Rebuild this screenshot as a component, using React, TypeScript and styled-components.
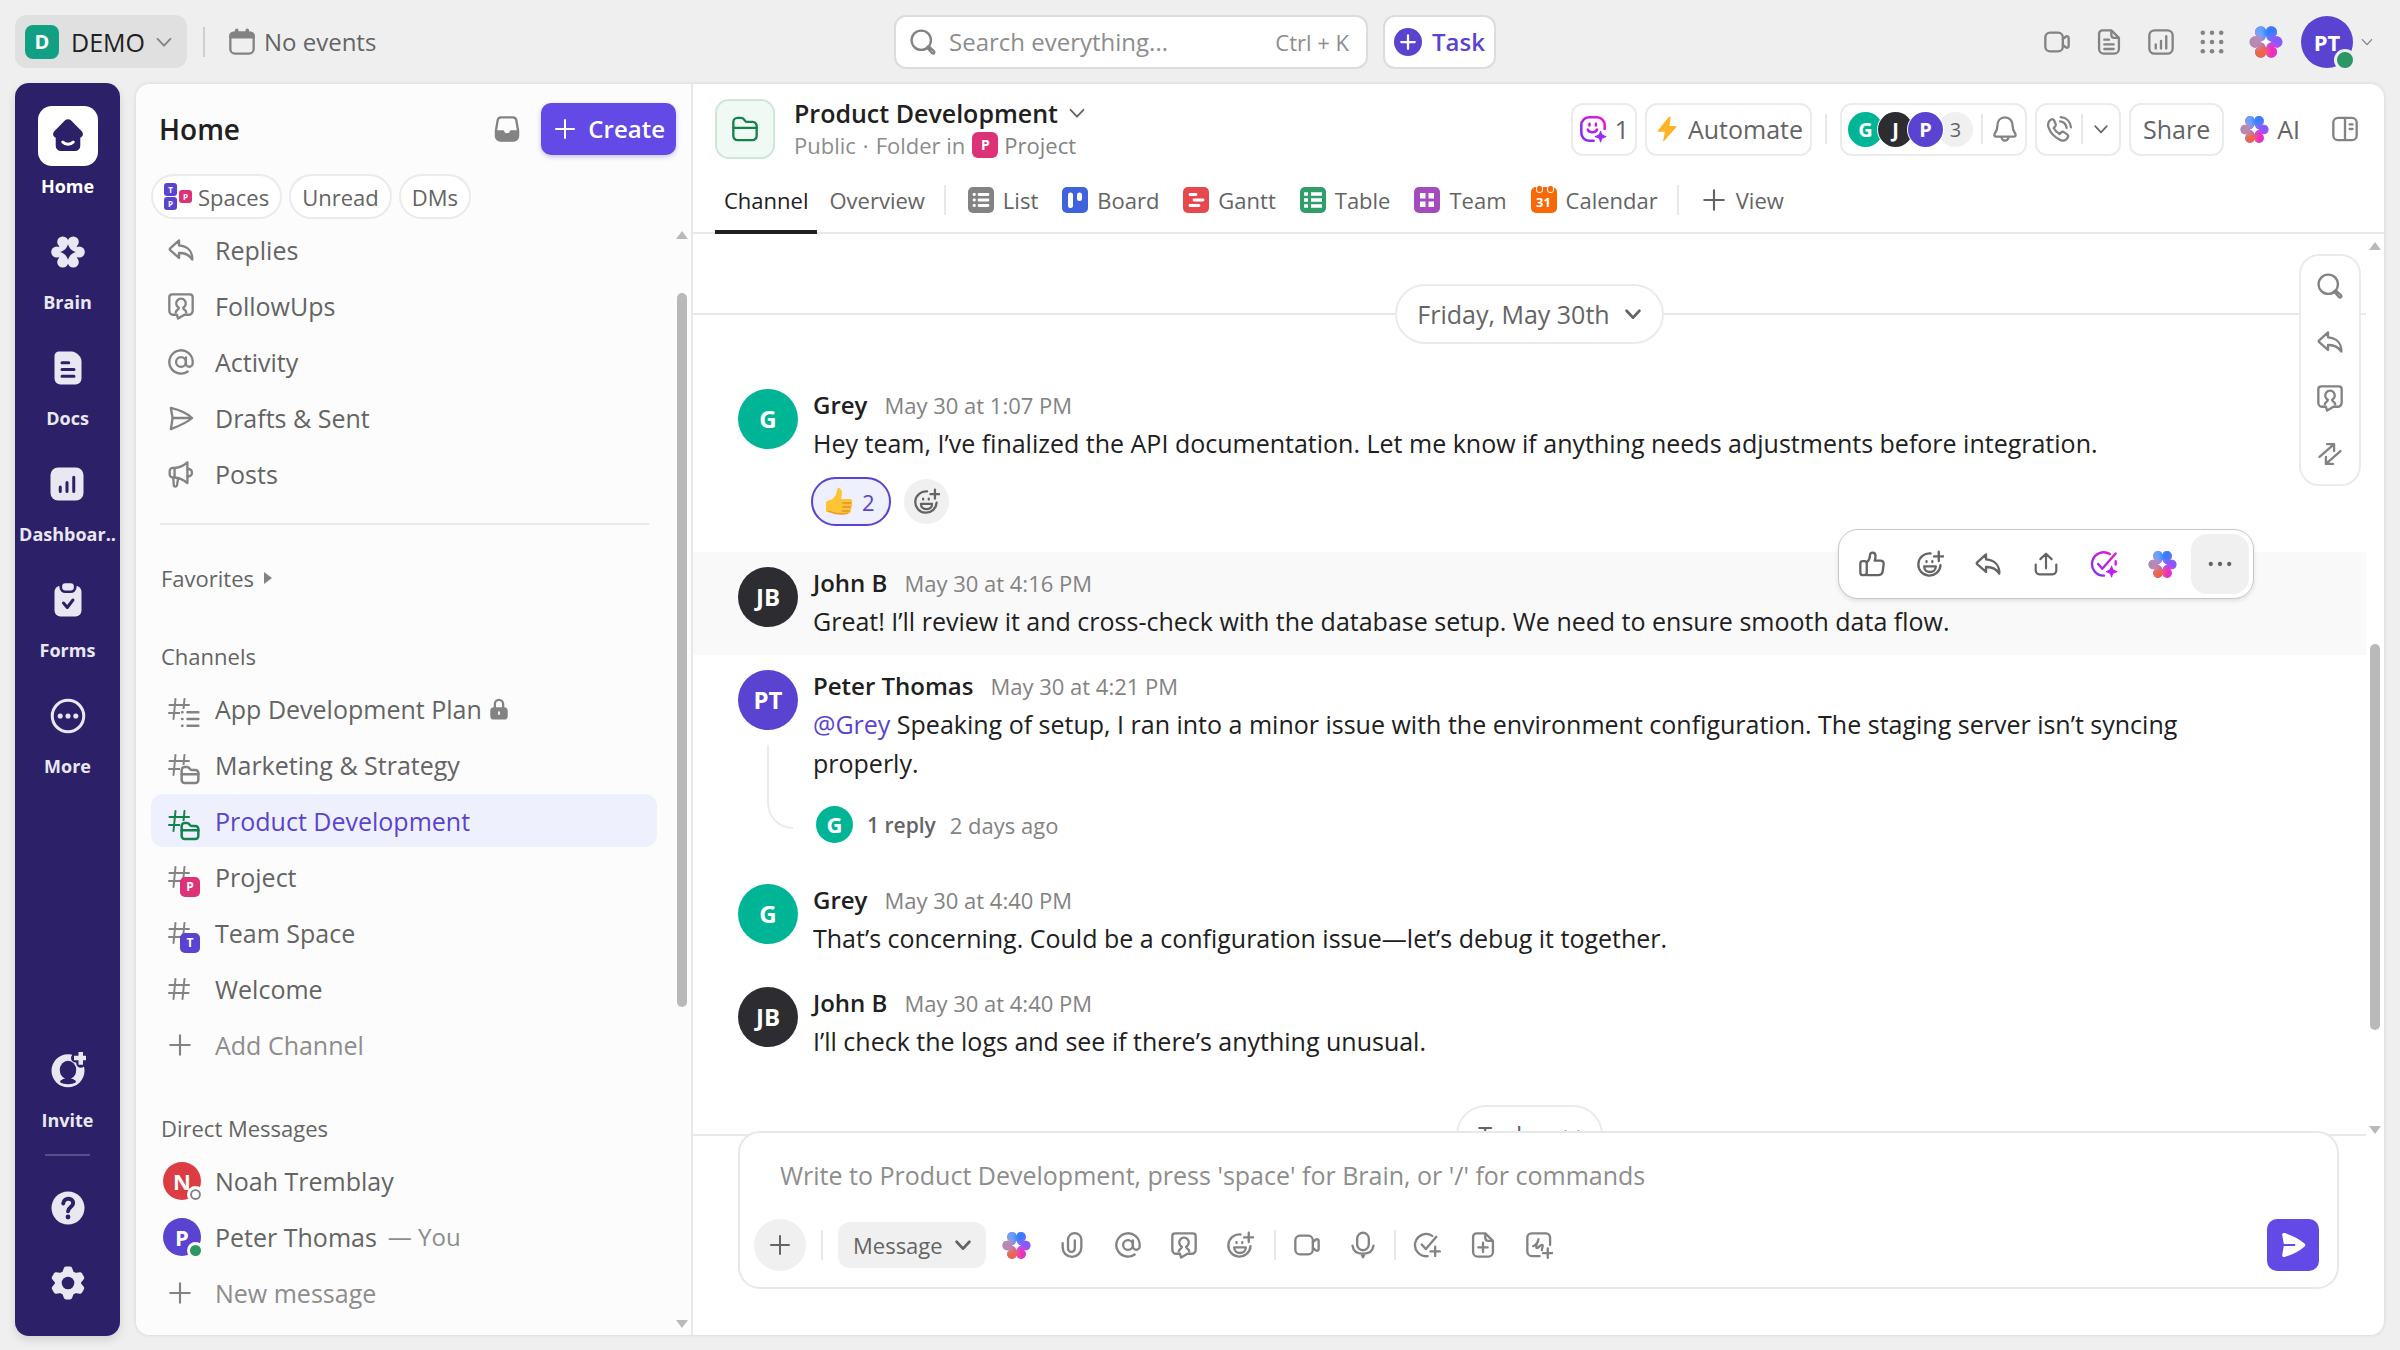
import React, { useId } from "react";
import styled, { createGlobalStyle } from "styled-components";

const ink = "#202020";
const body = "#646464";
const muted = "#838383";
const faint = "#8d8d8d";
const line = "#e8e8e8";
const brand = "#6349e6";
const violet = "#5a43d0";
const navy = "#2c2169";
const teal = "#00b596";
const coal = "#2d2d31";
const pink = "#dd3178";
const green = "#12834a";

const Global = createGlobalStyle`
  * { box-sizing: border-box; }
  html, body, #root { height: 100%; }
  body { margin: 0; background: #efefef; color: ${ink}; font-family: "Open Sans", "Noto Sans", sans-serif; font-size: 24px; line-height: 32px; }
  button, input, select { font: inherit; color: inherit; margin: 0; }
  button { border: 0; padding: 0; background: none; cursor: pointer; display: flex; align-items: center; }
  a { color: inherit; text-decoration: none; }
  ul { list-style: none; margin: 0; padding: 0; }
  h1, h2, p { margin: 0; }
  svg { display: block; flex: none; }
`;

/* ---------- icons ---------- */

const plusPath = (cx: number, cy: number, r: number) => `M${cx - r} ${cy}h${2 * r}M${cx} ${cy - r}v${2 * r}`;

const glyphs = {
  chevron: <path d="M5 8.5l7 7.5 7-7.5" />,
  plus: <path d="M3 12h18M12 3v18" />,
  search: (
    <>
      <circle cx="10.5" cy="10.5" r="8.3" />
      <path d="M16.6 15.6l4.8 4.3c1.1 1.1-.4 2.8-1.6 1.700l-4.300-4.900" />
    </>
  ),
  calendar: (
    <>
      <rect x="2" y="4" width="20" height="18" rx="4" />
      <path d="M2 6.500C2 5 3.500 4 5 4h14c1.500 0 3 1 3 2.500V8H2z" fill="currentColor" />
      <path d="M7.500 2v3M16.500 2v3" strokeWidth="3" />
    </>
  ),
  inbox: (
    <>
      <path d="M7 2h10a3 3 0 0 1 3 2.500l1.500 9V18a4 4 0 0 1-4 4h-11a4 4 0 0 1-4-4v-4.500l1.500-9A3 3 0 0 1 7 2z" />
      <path d="M3 14h5.500c.5 1.800 1.800 2.700 3.500 2.700s3-.9 3.500-2.700H21v4a3.500 3.500 0 0 1-3.500 3.500h-11A3.500 3.500 0 0 1 3 18z" fill="currentColor" />
    </>
  ),
  reply: <path d="M10.300 3.800L2.700 10.600a1 1 0 0 0 0 1.500l7.600 6.700v-4.200c4.800-.3 8.500 1.300 11.400 5.600.2-6.500-3.400-11.500-11.400-12.100z" />,
  followup: (
    <>
      <path d="M8.500 19.500H5.500A3.500 3.500 0 0 1 2 16V4.500A2.500 2.500 0 0 1 4.500 2h15A2.500 2.500 0 0 1 22 4.500V16a3.500 3.500 0 0 1-3.500 3.500H15l-5.500 3.300z" />
      <path d="M7.500 17.500c.2-2.400 2.700-2.200 2.700-4a4.100 4.100 0 1 1 3.600 0c0 1.800 2.700 1.600 2.700 4" />
    </>
  ),
  at: (
    <>
      <circle cx="12" cy="12" r="4.200" />
      <path d="M16.200 8v5.200a2.900 2.900 0 0 0 5.800 0V12a10 10 0 1 0-4.300 8.200" />
    </>
  ),
  send: <path d="M3.300 3.400C10 5 17.500 8.300 21.500 12 17.500 15.700 10 19 3.300 21.600L4.800 12zM4.800 12h16.200" />,
  megaphone: (
    <>
      <path d="M6.500 6.800H5A2.700 2.700 0 0 0 2.300 9.500v2.700A2.700 2.700 0 0 0 5 15h1.500zM6.500 6.800C10.500 6.600 14 5 17.500 2v17.800C14 16.800 10.500 15.200 6.500 15" />
      <path d="M17.500 7.800c5.200-1.100 5.200 7.200 0 6.100M5.300 15l.5 6.200a1.400 1.400 0 0 0 2.800.4l.9-5.600" />
    </>
  ),
  video: (
    <>
      <rect x="2" y="4" width="15" height="16" rx="4" />
      <path d="M17 9.500l2.400-2c1-.9 2.600-.3 2.600 1v7c0 1.300-1.600 1.900-2.600 1l-2.400-2" />
    </>
  ),
  doc: (
    <>
      <path d="M6.500 2H14l6.500 6.500v9.500a4 4 0 0 1-4 4h-9a4 4 0 0 1-4-4V5a3 3 0 0 1 3-3z" />
      <path d="M14 2.500V6a2.500 2.500 0 0 0 2.500 2.500h3.500M8 10h4M8 14h8M8 18h8" />
    </>
  ),
  chart: (
    <>
      <rect x="2" y="2" width="20" height="20" rx="4.500" />
      <path d="M7.500 14v3.500M12 11v6.500M16.500 7v10.500" />
    </>
  ),
  grid: (
    <g fill="currentColor" stroke="none">
      {[3.5, 12, 20.5].map((y) => [3.5, 12, 20.5].map((x) => <circle key={`${x}-${y}`} cx={x} cy={y} r="2.1" />))}
    </g>
  ),
  bell: (
    <>
      <path d="M12 2c-4 0-6.500 2.900-6.500 7.200 0 4.400-2 5.800-2.500 7.300-.4 1.200.3 2 1.500 2h15c1.200 0 1.900-.8 1.500-2-.5-1.500-2.500-2.900-2.500-7.300C18.500 4.900 16 2 12 2z" />
      <path d="M9 19c.3 2 1.300 3 3 3s2.700-1 3-3" />
    </>
  ),
  phone: (
    <>
      <path d="M5.300 3.800C3 5.300 2 7.500 3 10.500c1.600 5 5 8.500 10.300 11 2.800 1.200 5.200-.2 6.300-2.500.5-1 .2-1.800-.6-2.400l-2.800-1.900c-.9-.6-1.800-.4-2.500.4l-1.200 1.200c-2.400-1.300-3.800-2.900-5-5.200l1.200-1.300c.7-.8.8-1.700.3-2.500L7.700 4.500c-.6-.9-1.500-1.200-2.400-.7z" />
      <path d="M13 5.500c3 .4 5 2.400 5.500 5.500M13.500 1.800c4.800.4 8.200 3.800 8.700 8.700" />
    </>
  ),
  panel: (
    <>
      <rect x="2" y="2.500" width="20" height="19" rx="4" />
      <path d="M12 3v18M16 8h2.500M16 12h2.500" />
    </>
  ),
  swap: <path d="M3 14.500L15.500 3.500M9.500 3.500h6v6M21 9.500L8.500 20.500M14.500 20.500h-6v-6" />,
  thumb: (
    <>
      <rect x="2" y="9.500" width="5.500" height="12" rx="2" />
      <path d="M7.500 10.500c2-1.500 2.700-3.300 2.800-6 .2-3 4.700-3 4.700.6 0 1.500-.2 2.800-.7 4h5c1.800 0 2.900 1.300 2.700 3l-.9 6.500c-.3 1.900-1.500 2.900-3.300 2.900H7.500" />
    </>
  ),
  emoji: (
    <>
      <path d="M12.500 3A9.500 9.500 0 1 0 21 13" />
      <path d="M7 14h10c0 6.500-10 6.500-10 0zM9 9.500v.8M14 9.500v.8M19.500 1.500v8M15.500 5.500h8" />
    </>
  ),
  share: <path d="M12 16V2.500M6.800 7.500L12 2.500l5.200 5M2.500 12.500V18a3.500 3.500 0 0 0 3.500 3.500h12a3.500 3.500 0 0 0 3.500-3.500v-5.500" />,
  clip: <path d="M4 10.500v3.700a8 8 0 0 0 16 0V7.500a5.700 5.700 0 0 0-11.400 0V15a2.900 2.900 0 0 0 5.800 0V8" />,
  mic: (
    <>
      <rect x="7" y="1.500" width="10" height="15" rx="5" />
      <path d="M3 12.500c.6 4.500 4 7 9 7s8.400-2.500 9-7M10.500 19.500L12 22.500l1.500-3" />
    </>
  ),
  taskPlus: (
    <>
      <path d="M16.500 4.200A9.500 9.500 0 1 0 12.500 21.500M7.500 11.500l3.500 4L20 5" />
      <path d={plusPath(19, 17.5, 4)} />
    </>
  ),
  docPlus: (
    <>
      <path d="M6.500 2H14l6.500 6.500v9.500a4 4 0 0 1-4 4h-9a4 4 0 0 1-4-4V5a3 3 0 0 1 3-3z" />
      <path d="M14 2.500V6a2.500 2.500 0 0 0 2.500 2.500h3.500" />
      <path d={plusPath(12, 14, 4)} />
    </>
  ),
  canvasPlus: (
    <>
      <path d="M12.500 21.500H6A4 4 0 0 1 2 17.500V5.500a3.500 3.500 0 0 1 3.500-3.500h12.500A3.500 3.500 0 0 1 21.500 5.500V12" />
      <path d="M7 13c2-.5 4.500-3.500 4.500-6-.5 2.500-3 6.500-1.500 7.500 1.500.6 3.500-3.500 5-2.500 1 1-1 3-.5 4.500" />
      <path d={plusPath(19.5, 19, 4)} />
    </>
  ),
  more: (
    <g fill="currentColor" stroke="none">
      <circle cx="3.500" cy="12" r="2" />
      <circle cx="12" cy="12" r="2" />
      <circle cx="20.500" cy="12" r="2" />
    </g>
  ),
  folder: (
    <>
      <path d="M2 6a3.500 3.500 0 0 1 3.500-3.500h3c1.200 0 2 .4 2.700 1.300l.9 1.200c.4.6 1 .9 1.800.9h4.600A3.500 3.500 0 0 1 22 9.400V18a3.500 3.500 0 0 1-3.500 3.500h-13A3.500 3.500 0 0 1 2 18z" />
      <path d="M2 11h20" />
    </>
  ),
  hash: <path d="M8.500 2L6.500 22M17.500 2l-2 20M2.500 8h19.500M2 16h19.500" />,
  list: <path d="M9 4h13M9 12h13M9 20h13M2.500 4h.5M2.500 12h.5M2.500 20h.5" />,
  lock: (
    <>
      <rect x="2.500" y="10" width="19" height="13.500" rx="4" fill="currentColor" stroke="none" />
      <path d="M7.500 10.500V6.500a4.500 4.500 0 0 1 9 0v4" strokeWidth="2.500" />
      <path d="M12 15.500v2" stroke="#fcfcfc" />
    </>
  ),
  bolt: <path d="M13.500 1L3.500 13.500c-.4.500-.1 1 .5 1h6L8.500 22.500c-.1.800.6 1 1 .4L20.500 10.300c.4-.5.1-1.100-.5-1.100h-5.700l1-7.500c.1-.9-1-1.400-1.800-.7z" fill="currentColor" stroke="none" />,
};

type GlyphName = keyof typeof glyphs;

const Icon = ({ name, size = 28, weight = 2 }: { name: GlyphName; size?: number; weight?: number }) => (
  <svg width={size} height={size} viewBox="0 0 24 24" fill="none" stroke="currentColor" strokeWidth={weight} strokeLinecap="round" strokeLinejoin="round" aria-hidden="true">
    {glyphs[name]}
  </svg>
);

const petals = [
  { x: 8.2, y: 4.9, c: "#64a8ff" },
  { x: 15.8, y: 4.9, c: "#2f80ff" },
  { x: 19.6, y: 12, c: "#8658ff" },
  { x: 15.8, y: 19.1, c: "#f02bc0" },
  { x: 8.2, y: 19.1, c: "#f0653a" },
  { x: 4.4, y: 12, c: "#b88aae" },
];

const Brain = ({ size = 30 }: { size?: number }) => {
  const id = useId().replace(/[^a-zA-Z0-9]/g, "");
  return (
    <svg width={size} height={size} viewBox="0 0 24 24" aria-hidden="true">
      <defs>
        <clipPath id={`p${id}`}>
          {petals.map((p) => (
            <circle key={p.c} cx={p.x} cy={p.y} r="4" />
          ))}
          <circle cx="12" cy="12" r="6.500" />
        </clipPath>
        <filter id={`b${id}`} x="-20%" y="-20%" width="140%" height="140%">
          <feGaussianBlur stdDeviation="1.600" />
        </filter>
      </defs>
      <g clipPath={`url(#p${id})`}>
        <rect width="24" height="24" fill="#9a6cf0" />
        <g filter={`url(#b${id})`}>
          {petals.map((p) => (
            <circle key={p.c} cx={p.x} cy={p.y} r="5.500" fill={p.c} />
          ))}
        </g>
      </g>
      <path d="M12 8c.7 2.400 1.600 3.300 4 4-2.400.7-3.300 1.600-4 4-.7-2.400-1.600-3.300-4-4 2.400-.7 3.300-1.600 4-4z" fill="#fff" />
    </svg>
  );
};

const aiGradient = (id: string) => (
  <defs>
    <linearGradient id={id} x1="0" y1="1" x2="1" y2="0">
      <stop offset="0" stopColor="#7b2ff7" />
      <stop offset="1" stopColor="#f012d8" />
    </linearGradient>
  </defs>
);

const AiFace = () => (
  <svg width="28" height="28" viewBox="0 0 24 24" fill="none" stroke="url(#aiFace)" strokeWidth="2.200" strokeLinecap="round" aria-hidden="true">
    {aiGradient("aiFace")}
    <path d="M12.500 22H8.500A6.500 6.500 0 0 1 2 15.500v-7A6.500 6.500 0 0 1 8.500 2h7A6.500 6.500 0 0 1 22 8.500V12M9 7.500v1.500M14.500 7.500v1.500M7.500 12.500c1.500 3 6.500 3 8 0" />
    <path d="M18.500 14c.7 3 1.500 3.800 4.500 4.500-3 .7-3.800 1.500-4.500 4.500-.7-3-1.500-3.800-4.500-4.500 3-.7 3.800-1.500 4.500-4.500z" fill="#9a2bf5" stroke="#9a2bf5" strokeWidth="1" strokeLinejoin="round" />
  </svg>
);

const AiTask = () => (
  <svg width="28" height="28" viewBox="0 0 24 24" fill="none" stroke="url(#aiTask)" strokeWidth="2" strokeLinecap="round" strokeLinejoin="round" aria-hidden="true">
    {aiGradient("aiTask")}
    <path d="M17 3.500A10 10 0 1 0 12 22M7 12l3.500 4L22 3M22 9.500v3" />
    <path d="M18.500 14c.7 3 1.500 3.800 4.500 4.500-3 .7-3.800 1.500-4.500 4.500-.7-3-1.500-3.800-4.500-4.500 3-.7 3.800-1.500 4.500-4.500z" fill="#c01cf0" stroke="#c01cf0" strokeWidth="1" />
  </svg>
);

const ThumbEmoji = () => (
  <svg width="30" height="30" viewBox="0 0 30 30" aria-hidden="true">
    <path d="M2 15c2-1.500 5-2 7-3.500 3-2.500 3.500-5 4-8.500.3-2 1.600-2.500 3-1.500 3 2.500 2 7 1 10.500h9c2.500 0 3 3 1.200 4 1.500 1 1.200 3.200-.2 3.700 1 1.200.6 3-.8 3.500.8 1.300.2 3-1.500 3.400-4 .9-8 1-12 .4-3-.5-5-2-7.500-2H2z" fill="#fdc435" />
    <path d="M19 16h8M19 20h7.500M18.500 24h7" stroke="#e0912a" strokeWidth="1.500" strokeLinecap="round" />
    <path d="M4 24.500c3 0 5 1.600 8 2.100 4 .6 8 .5 12-.4" stroke="#f09a2a" strokeWidth="1.500" fill="none" />
  </svg>
);

const NavGlyph = ({ name }: { name: string }) => {
  const solid = { fill: "currentColor" };
  const cut = { stroke: navy, strokeWidth: 2, strokeLinecap: "round" as const, strokeLinejoin: "round" as const, fill: "none" };
  return (
    <svg width="36" height="36" viewBox="0 0 24 24" aria-hidden="true">
      {name === "home" && (
        <>
          <path {...solid} d="M9.900 1.700a3 3 0 0 1 4.200 0l6.900 7c1.600 1.700 1.100 3.800-.8 4.400V18.500a3.500 3.500 0 0 1-3.500 3.500h-9.400a3.500 3.500 0 0 1-3.500-3.500v-5.400c-1.900-.6-2.400-2.700-.8-4.400z" />
          <path {...cut} stroke="#fff" d="M8.500 16c1.800 2 5.200 2 7 0" />
        </>
      )}
      {name === "brain" && (
        <>
          {[[8.5, 5.3], [15.5, 5.3], [19.5, 12], [15.5, 18.7], [8.5, 18.7], [4.5, 12]].map(([x, y]) => (
            <circle key={`${x}${y}`} {...solid} cx={x} cy={y} r="3.700" />
          ))}
          <circle {...solid} cx="12" cy="12" r="7" />
          <path fill={navy} d="M12 6.800c1 2.900 2.300 4.200 5.200 5.200-2.900 1-4.200 2.300-5.200 5.200-1-2.900-2.300-4.200-5.200-5.200 2.900-1 4.200-2.300 5.200-5.200z" />
        </>
      )}
      {name === "docs" && (
        <>
          <path {...solid} d="M6 1h8.500c3 0 6.500 3.500 6.500 6.500V19a4 4 0 0 1-4 4H7a4 4 0 0 1-4-4V4a3 3 0 0 1 3-3z" />
          <path {...cut} d="M8 8.500h4.500M8 13h8M8 17.500h8" />
        </>
      )}
      {name === "dash" && (
        <>
          <rect {...solid} x="1" y="1" width="22" height="22" rx="5" />
          <path {...cut} d="M7.500 14v3M12 11v6M16.500 7.500v9.500" />
        </>
      )}
      {name === "forms" && (
        <>
          <rect {...solid} x="3" y="2.500" width="18" height="20.500" rx="4" />
          <rect fill="currentColor" stroke={navy} strokeWidth="1.800" x="7.200" y="0" width="9.600" height="6.500" rx="3" />
          <path {...cut} d="M9 14l2.500 3 3.800-5" />
        </>
      )}
      {name === "more" && (
        <>
          <circle cx="12" cy="12" r="10.500" fill="none" stroke="currentColor" strokeWidth="2" />
          {[6.8, 12, 17.2].map((x) => (
            <circle key={x} {...solid} cx={x} cy="12" r="1.700" />
          ))}
        </>
      )}
      {name === "invite" && (
        <>
          <circle {...solid} cx="12" cy="12.500" r="11" />
          <ellipse cx="12" cy="12" rx="5.500" ry="6.200" fill={navy} />
          <path fill={navy} d="M6.500 20c1-1.800 3-2.500 5.500-2.500s4.500.7 5.500 2.500c-3 2-8 2-11 0z" />
          <path stroke={navy} strokeWidth="6" strokeLinecap="round" d="M20.500.500v7M17 4h7" />
          <path stroke="currentColor" strokeWidth="3" d="M20.500-.500v9M16 4h9" />
        </>
      )}
      {name === "help" && (
        <>
          <circle {...solid} cx="12" cy="12" r="11" />
          <path {...cut} strokeWidth="2.600" d="M8.800 9c.4-4.500 7-4 6.600 0-.2 2.400-3.200 2.400-3.400 5.200" />
          <circle cx="12" cy="18" r="1.600" fill={navy} />
        </>
      )}
      {name === "gear" && (
        <>
          <path
            {...solid}
            stroke="currentColor"
            strokeWidth="3"
            strokeLinejoin="round"
            d="M10.700 2.500h2.600l1.200 3 2.300 1.300 3.200-.5 1.300 2.300-2 2.500v1.800l2 2.500-1.300 2.300-3.200-.5-2.300 1.300-1.200 3h-2.600l-1.200-3-2.300-1.300-3.200.5-1.300-2.300 2-2.500v-1.800l-2-2.500L4 6.300l3.200.5 2.300-1.300z"
          />
          <circle cx="12" cy="12" r="4.200" fill={navy} />
        </>
      )}
    </svg>
  );
};

const viewColors: Record<string, string> = { list: "#838383", board: "#3e63dd", gantt: "#e5484d", table: "#2f9e6b", team: "#a44bbd" };

const ViewGlyph = ({ kind }: { kind: string }) => (
  <svg width="26" height="26" viewBox="0 0 26 26" aria-hidden="true">
    <rect width="26" height="26" rx="5" fill={viewColors[kind]} />
    <g stroke="#fff" strokeWidth="2.800" strokeLinecap="round" fill="none">
      {kind === "list" && <path d="M6 7.500h.5M11 7.500h9M6 13h.5M11 13h9M6 18.500h.5M11 18.500h9" />}
      {kind === "board" && <path strokeWidth="5" d="M8.500 8v10.500M17.500 8v3.500" />}
      {kind === "gantt" && <path d="M7 7.500h6M11 13h9M7 18.500h9" />}
      {kind === "table" && <path strokeLinecap="butt" strokeWidth="3.500" d="M4 7h4M11 7h11M4 13h4M11 13h11M4 19h4M11 19h11" />}
      {kind === "team" && <path strokeLinecap="butt" strokeWidth="5.500" d="M6 8.700h5.500M14.500 8.700h5.500M6 17.300h5.500M14.500 17.300h5.500" />}
    </g>
  </svg>
);

/* ---------- top bar ---------- */

const Page = styled.div`
  height: 100vh;
  display: flex;
  flex-direction: column;
`;

const TopBar = styled.header`
  height: 83px;
  flex: none;
  display: grid;
  grid-template-columns: 1fr auto 1fr;
  align-items: center;
  padding: 0 25px 0 15px;
`;

const TopGroup = styled.div<{ $end?: boolean; $gap?: number }>`
  display: flex;
  align-items: center;
  gap: ${(p) => p.$gap ?? 0}px;
  justify-content: ${(p) => (p.$end ? "flex-end" : "flex-start")};
  color: ${muted};
`;

const WorkspaceButton = styled.button`
  height: 53px;
  padding: 0 12px 0 10px;
  gap: 8px;
  border-radius: 12px;
  background: #e0e0e0;
  color: ${muted};
`;

const WorkspaceName = styled.span`
  color: ${ink};
  font-weight: 500;
  font-size: 25px;
  padding-left: 4px;
`;

const Tile = styled.span<{ $bg: string; $size: number; $font: number; $radius?: number }>`
  display: block;
  width: ${(p) => p.$size}px;
  height: ${(p) => p.$size}px;
  flex: none;
  border-radius: ${(p) => p.$radius ?? 5}px;
  background: ${(p) => p.$bg};
  color: #fff;
  font-weight: 700;
  font-size: ${(p) => p.$font}px;
  line-height: ${(p) => p.$size}px;
  text-align: center;
`;

const VRule = styled.span<{ $color?: string }>`
  width: 2px;
  height: 30px;
  flex: none;
  background: ${(p) => p.$color ?? line};
`;

const EventsButton = styled.button`
  gap: 8px;
  padding-left: 7px;
  color: ${muted};
  span { color: ${body}; }
`;

const SearchBox = styled.label`
  width: 474px;
  height: 54px;
  display: flex;
  align-items: center;
  gap: 12px;
  padding: 0 17px 0 13px;
  border: 2px solid #dcdcdc;
  border-radius: 12px;
  background: #fff;
  color: ${muted};
`;

const PlainInput = styled.input`
  flex: 1;
  min-width: 0;
  border: 0;
  padding: 0;
  outline: 0;
  background: none;
  &::placeholder { color: ${faint}; opacity: 1; }
`;

const Shortcut = styled.kbd`
  font: inherit;
  font-size: 22px;
  color: ${faint};
`;

const TaskButton = styled.button`
  height: 54px;
  padding: 0 9px;
  gap: 10px;
  border: 2px solid #dcdcdc;
  border-radius: 12px;
  background: #fff;
  color: ${violet};
  font-weight: 600;
`;

const TaskDot = styled.span`
  width: 28px;
  height: 28px;
  border-radius: 50%;
  background: ${violet};
  color: #fff;
  display: grid;
  place-items: center;
`;

const Avatar = styled.span<{ $bg: string; $size: number; $font: number }>`
  position: relative;
  width: ${(p) => p.$size}px;
  height: ${(p) => p.$size}px;
  flex: none;
  border-radius: 50%;
  background: ${(p) => p.$bg};
  color: #fff;
  font-weight: 700;
  font-size: ${(p) => p.$font}px;
  line-height: ${(p) => p.$size}px;
  text-align: center;
`;

const Presence = styled.span<{ $size: number; $online?: boolean; $ring: string }>`
  position: absolute;
  right: -3px;
  bottom: -3px;
  width: ${(p) => p.$size}px;
  height: ${(p) => p.$size}px;
  border-radius: 50%;
  border: 3px solid ${(p) => p.$ring};
  background: ${(p) => (p.$online ? "#2a9764" : "#fff")};
  box-shadow: ${(p) => (p.$online ? "none" : `inset 0 0 0 2px ${muted}`)};
`;

/* ---------- frame ---------- */

const Frame = styled.div`
  flex: 1;
  min-height: 0;
  display: flex;
  gap: 16px;
  padding: 0 16px 14px 15px;
`;

const Rail = styled.nav`
  width: 105px;
  flex: none;
  display: flex;
  flex-direction: column;
  justify-content: space-between;
  padding: 23px 0;
  border-radius: 14px;
  background: ${navy};
  color: #e9e8f2;
  box-shadow: 0 4px 10px rgba(0, 0, 0, 0.12);
`;

const RailGroup = styled.div<{ $gap: number }>`
  display: flex;
  flex-direction: column;
  align-items: center;
  gap: ${(p) => p.$gap}px;
`;

const RailItem = styled.a<{ $on?: boolean }>`
  display: flex;
  flex-direction: column;
  align-items: center;
  gap: 8px;
  font-size: 18px;
  line-height: 24px;
  font-weight: 700;
  color: ${(p) => (p.$on ? "#fff" : "inherit")};
`;

const RailTile = styled.span<{ $on?: boolean }>`
  width: 60px;
  height: 60px;
  display: grid;
  place-items: center;
  border-radius: 14px;
  background: ${(p) => (p.$on ? "#fff" : "transparent")};
  color: ${(p) => (p.$on ? navy : "inherit")};
`;

const RailRule = styled.span`
  width: 45px;
  height: 2px;
  margin: 7px 0;
  background: #574e8b;
`;

const Workspace = styled.div`
  flex: 1;
  min-width: 0;
  display: flex;
  margin: 1px 0;
  border-radius: 14px;
  overflow: hidden;
  background: #fff;
  box-shadow: 0 0 4px rgba(0, 0, 0, 0.12);
`;

/* ---------- sidebar ---------- */

const Sidebar = styled.aside`
  width: 557px;
  flex: none;
  display: flex;
  flex-direction: column;
  background: #fcfcfc;
  border-right: 2px solid ${line};
`;

const SideHead = styled.div`
  display: flex;
  align-items: center;
  gap: 20px;
  padding: 19px 15px 0 23px;
  color: ${muted};
`;

const SideTitle = styled.h1`
  flex: 1;
  color: ${ink};
  font-size: 28px;
  line-height: 40px;
  font-weight: 600;
`;

const CreateButton = styled.button`
  height: 52px;
  padding: 0 11px 0 12px;
  gap: 11px;
  border-radius: 10px;
  background: ${brand};
  color: #fff;
  font-weight: 600;
  box-shadow: 0 2px 5px rgba(90, 67, 208, 0.3);
`;

const Chips = styled.div`
  display: flex;
  gap: 7px;
  padding: 19px 15px 4px;
`;

const Chip = styled.button`
  height: 45px;
  padding: 0 11px;
  gap: 6px;
  border: 2px solid #ebebeb;
  border-radius: 23px;
  background: #fff;
  color: ${body};
  font-size: 22px;
  font-weight: 500;
`;

const SpaceStack = styled.span`
  display: grid;
  grid-template-columns: 13px 13px;
  grid-template-rows: 13px 13px;
  gap: 1px 2px;
  & > :nth-child(2) { grid-column: 2; grid-row: 1 / 3; align-self: center; }
`;

const SideScroll = styled.div`
  flex: 1;
  min-height: 0;
  display: flex;
`;

const SideList = styled.div`
  flex: 1;
  min-width: 0;
  overflow: hidden;
  padding-left: 15px;
`;

const Rows = styled.ul`
  display: flex;
  flex-direction: column;
  gap: 3px;
  padding-bottom: 5px;
`;

const Row = styled.a<{ $on?: boolean; $faint?: boolean }>`
  height: 53px;
  margin-right: 16px;
  display: flex;
  align-items: center;
  gap: 11px;
  padding: 0 8px 0 12px;
  border-radius: 12px;
  background: ${(p) => (p.$on ? "#eef0fe" : "transparent")};
  color: ${(p) => (p.$on ? violet : p.$faint ? faint : body)};
  font-size: 25px;
  white-space: nowrap;
`;

const RowLabel = styled.span`
  display: flex;
  align-items: center;
  gap: 6px;
`;

const RowIcon = styled.span<{ $color?: string }>`
  position: relative;
  width: 41px;
  padding-left: 4px;
  height: 26px;
  display: flex;
  align-items: center;
  color: ${(p) => p.$color ?? muted};
`;

const CornerGlyph = styled.span<{ $cover: string }>`
  position: absolute;
  left: 17px;
  top: 13px;
  background: ${(p) => p.$cover};
`;

const PersonSlot = styled.span`
  width: 41px;
  display: flex;
`;

const You = styled.span`
  color: ${faint};
  font-size: 24px;
`;

const SideRule = styled.hr`
  height: 2px;
  margin: 18px 24px 27px 9px;
  border: 0;
  background: ${line};
`;

const SectionTitle = styled.h2`
  height: 52px;
  display: flex;
  align-items: center;
  gap: 10px;
  padding-left: 10px;
  color: ${body};
  font-size: 22px;
  font-weight: 500;
`;

const Section = styled.section`
  margin-bottom: 26px;
`;

const Arrow = styled.span<{ $dir: "up" | "down" | "right" }>`
  width: 0;
  height: 0;
  flex: none;
  border: 6px solid transparent;
  ${(p) => (p.$dir === "up" ? "border-bottom: 8px solid #b9b9b9; border-top: 0;" : "")}
  ${(p) => (p.$dir === "down" ? "border-top: 8px solid #b9b9b9; border-bottom: 0;" : "")}
  ${(p) => (p.$dir === "right" ? `border-left: 8px solid ${muted}; border-right: 0;` : "")}
`;

const ScrollBar = styled.div`
  width: 18px;
  flex: none;
  display: flex;
  flex-direction: column;
  align-items: center;
  padding: 8px 0 7px;
`;

const Track = styled.div<{ $before: number; $after: number }>`
  flex: 1;
  display: grid;
  grid-template-rows: ${(p) => `${p.$before}fr ${100 - p.$before - p.$after}fr ${p.$after}fr`};
  &::after {
    content: "";
    grid-row: 2;
    width: 10px;
    border-radius: 5px;
    background: #b9b9b9;
  }
`;

/* ---------- channel header ---------- */

const Main = styled.main`
  flex: 1;
  min-width: 0;
  display: flex;
  flex-direction: column;
`;

const HeadRow = styled.div`
  display: flex;
  align-items: center;
  gap: 19px;
  padding: 13px 25px 0 22px;
`;

const FolderTile = styled.span`
  width: 60px;
  height: 60px;
  flex: none;
  display: grid;
  place-items: center;
  border: 2px solid #cfe6da;
  border-radius: 14px;
  background: #f1f9f5;
  color: ${green};
`;

const Heading = styled.div`
  flex: 1;
  display: flex;
  flex-direction: column;
`;

const TitleButton = styled.button`
  gap: 8px;
  color: ${body};
`;

const ChannelName = styled.span`
  color: ${ink};
  font-size: 25px;
  font-weight: 600;
`;

const Crumbs = styled.div`
  display: flex;
  align-items: center;
  gap: 7px;
  font-size: 22px;
  color: ${faint};
`;

const CrumbLink = styled.a`
  display: flex;
  align-items: center;
  gap: 6px;
  color: ${muted};
  font-weight: 500;
`;

const Actions = styled.div`
  display: flex;
  align-items: center;
  gap: 8px;
  color: ${body};
  font-size: 25px;
  font-weight: 500;
`;

const Outlined = styled.div<{ $pad?: number }>`
  height: 53px;
  display: flex;
  align-items: center;
  gap: 8px;
  padding: 0 ${(p) => p.$pad ?? 9}px;
  border: 2px solid #ebebeb;
  border-radius: 12px;
  background: #fff;
  font-weight: 500;
`;

const Spacer = styled.span<{ $w: number }>`
  width: ${(p) => p.$w}px;
  flex: none;
`;

const ActionRule = styled(VRule)`
  margin: 0 5px;
`;

const Faces = styled.span`
  display: flex;
  & > span + span { margin-left: -5px; box-shadow: 0 0 0 1px #fff; }
`;

const Count = styled.span`
  width: 35px;
  height: 35px;
  border-radius: 50%;
  background: #f0f0f0;
  color: ${body};
  font-size: 20px;
  line-height: 35px;
  text-align: center;
`;

const Tint = styled.span<{ $color?: string }>`
  display: flex;
  align-items: center;
  color: ${(p) => p.$color ?? muted};
`;

const Tabs = styled.nav`
  height: 73px;
  display: flex;
  align-items: center;
  padding: 7px 22px 0;
  border-bottom: 2px solid ${line};
  font-size: 22px;
  font-weight: 500;
  color: ${body};
`;

const Tab = styled.a<{ $on?: boolean }>`
  align-self: stretch;
  display: flex;
  align-items: center;
  gap: 9px;
  padding: 0 ${(p) => (p.$on ? 9 : 12)}px;
  position: relative;
  color: ${(p) => (p.$on ? ink : "inherit")};
  white-space: nowrap;
  &::after {
    content: "";
    display: ${(p) => (p.$on ? "block" : "none")};
    position: absolute;
    left: 0;
    right: 0;
    bottom: -2px;
    height: 4px;
    background: ${ink};
  }
`;

const DayIcon = styled.span`
  position: relative;
  width: 26px;
  height: 26px;
  border-radius: 5px;
  background: #f76808;
  color: #fff;
  font-size: 13px;
  font-weight: 700;
  line-height: 30px;
  text-align: center;
  &::before, &::after {
    content: "";
    position: absolute;
    top: -2px;
    left: 5px;
    width: 5px;
    height: 6px;
    border: 1px solid #fff;
    border-radius: 3px;
    background: #f76808;
  }
  &::after { left: 16px; }
`;

/* ---------- feed ---------- */

const FeedWrap = styled.div`
  position: relative;
  flex: 1;
  min-height: 0;
  display: flex;
`;

const Feed = styled.div`
  flex: 1;
  min-width: 0;
  overflow: hidden;
  padding-top: 20px;
`;

const DateRow = styled.div`
  display: flex;
  align-items: center;
  margin: 30px 0;
  &::before, &::after { content: ""; flex: 1; height: 2px; background: ${line}; }
`;

const DatePill = styled.button`
  height: 60px;
  padding: 0 18px 0 20px;
  gap: 12px;
  border: 2px solid #ebebeb;
  border-radius: 30px;
  color: ${body};
  font-size: 25px;
  font-weight: 500;
`;

const Message = styled.article<{ $hover?: boolean; $extra?: boolean }>`
  position: relative;
  display: flex;
  gap: 15px;
  padding: 15px 120px ${(p) => (p.$extra ? 26 : 14)}px 45px;
  background: ${(p) => (p.$hover ? "#f9f9f9" : "transparent")};
`;

const AvatarColumn = styled.div`
  width: 60px;
  display: flex;
  flex-direction: column;
  align-items: center;
`;

const ThreadLine = styled.span`
  width: 26px;
  flex: 1;
  margin: 15px 5px 14px 0;
  align-self: flex-end;
  border: solid #ebebeb;
  border-width: 0 0 2px 2px;
  border-bottom-left-radius: 26px;
`;

const MessageBody = styled.div`
  flex: 1;
  min-width: 0;
`;

const Byline = styled.div`
  display: flex;
  align-items: center;
  gap: 17px;
  height: 32px;
  margin-bottom: 3px;
`;

const Author = styled.span`
  font-weight: 600;
`;

const Time = styled.time`
  font-size: 22px;
  font-weight: 400;
  color: ${muted};
`;

const Text = styled.p`
  font-size: 25px;
  line-height: 39px;
  a { color: ${violet}; }
`;

const Reactions = styled.div`
  display: flex;
  align-items: center;
  gap: 13px;
  margin: 14px 0 0 -2px;
`;

const Reaction = styled.button`
  height: 49px;
  padding: 0 14px 0 11px;
  gap: 8px;
  border: 2px solid ${violet};
  border-radius: 25px;
  background: #eef0fe;
  color: ${violet};
  font-size: 22px;
  font-weight: 500;
`;

const AddReaction = styled.button`
  width: 45px;
  height: 45px;
  justify-content: center;
  border-radius: 50%;
  background: #f0f0f0;
  color: ${body};
`;

const ThreadLink = styled.a`
  display: flex;
  align-items: center;
  gap: 14px;
  margin-top: 23px;
  padding-left: 3px;
  font-size: 21px;
  color: ${body};
  font-weight: 600;
`;

const HoverBar = styled.div`
  position: absolute;
  top: -23px;
  right: 112px;
  display: flex;
  padding: 4px;
  border: 1px solid #c8c8c8;
  border-radius: 20px;
  background: #fff;
  color: ${body};
  box-shadow: 0 2px 4px rgba(0, 0, 0, 0.1);
`;

const HoverButton = styled.button<{ $on?: boolean }>`
  width: 58px;
  height: 60px;
  justify-content: center;
  border-radius: 16px;
  background: ${(p) => (p.$on ? "#f0f0f0" : "transparent")};
`;

const SideTools = styled.div`
  position: absolute;
  top: 20px;
  right: 23px;
  width: 62px;
  display: flex;
  flex-direction: column;
  padding: 2px 0;
  border: 2px solid #ebebeb;
  border-radius: 20px;
  background: #fff;
  color: ${muted};
  button { height: 56px; justify-content: center; }
`;

/* ---------- composer ---------- */

const ComposerWrap = styled.div`
  position: relative;
  margin-top: -10px;
  padding: 0 45px 46px;
`;

const Composer = styled.form`
  display: flex;
  flex-direction: column;
  gap: 20px;
  padding: 18px 18px 16px 14px;
  border: 2px solid #e8e8e8;
  border-radius: 22px;
  background: #fff;
`;

const ComposerInput = styled(PlainInput)`
  height: 48px;
  flex: none;
  padding-left: 26px;
  font-size: 25px;
`;

const ComposerBar = styled.div`
  display: flex;
  align-items: center;
  color: ${muted};
`;

const ComposerIcon = styled.button`
  width: 56px;
  height: 52px;
  justify-content: center;
`;

const RoundButton = styled.button`
  width: 52px;
  height: 52px;
  justify-content: center;
  margin-right: 15px;
  border-radius: 50%;
  background: #f0f0f0;
  color: ${body};
`;

const SelectBox = styled.span`
  position: relative;
  display: flex;
  align-items: center;
  margin: 0 2px 0 15px;
  color: ${body};
  svg { position: absolute; right: 12px; pointer-events: none; }
`;

const ModeSelect = styled.select`
  appearance: none;
  height: 46px;
  width: 148px;
  padding: 0 40px 0 15px;
  border: 0;
  border-radius: 12px;
  background: #f0f0f0;
  font-size: 22px;
  font-weight: 500;
`;

const SendButton = styled.button`
  width: 52px;
  height: 52px;
  margin-left: auto;
  justify-content: center;
  border-radius: 10px;
  background: ${brand};
`;

/* ---------- data ---------- */

const railItems = [
  ["home", "Home"],
  ["brain", "Brain"],
  ["docs", "Docs"],
  ["dash", "Dashboar.."],
  ["forms", "Forms"],
  ["more", "More"],
];

const inboxRows: [GlyphName, string][] = [
  ["reply", "Replies"],
  ["followup", "FollowUps"],
  ["at", "Activity"],
  ["send", "Drafts & Sent"],
  ["megaphone", "Posts"],
];

type Channel = { name: string; sub?: "list" | "folder"; tile?: [string, string]; on?: boolean; locked?: boolean };

const channels: Channel[] = [
  { name: "App Development Plan", sub: "list", locked: true },
  { name: "Marketing & Strategy", sub: "folder" },
  { name: "Product Development", sub: "folder", on: true },
  { name: "Project", tile: ["P", pink] },
  { name: "Team Space", tile: ["T", violet] },
  { name: "Welcome" },
];

const views = [
  ["list", "List"],
  ["board", "Board"],
  ["gantt", "Gantt"],
  ["table", "Table"],
  ["team", "Team"],
];

const Bar = ({ before, after }: { before: number; after: number }) => (
  <ScrollBar aria-hidden="true">
    <Arrow $dir="up" />
    <Track $before={before} $after={after} />
    <Arrow $dir="down" />
  </ScrollBar>
);

const Post = ({
  who,
  initials,
  color,
  at,
  hover,
  thread,
  extra,
  tools,
  children,
}: {
  who: string;
  initials: string;
  color: string;
  at: string;
  hover?: boolean;
  thread?: boolean;
  extra?: React.ReactNode;
  tools?: React.ReactNode;
  children: React.ReactNode;
}) => (
  <Message $hover={hover} $extra={Boolean(extra)}>
    <AvatarColumn>
      <Avatar $bg={color} $size={60} $font={24}>{initials}</Avatar>
      {thread && <ThreadLine />}
    </AvatarColumn>
    <MessageBody>
      <Byline>
        <Author>{who}</Author>
        <Time>{at}</Time>
      </Byline>
      <Text>{children}</Text>
      {extra}
    </MessageBody>
    {tools}
  </Message>
);

const hoverTools: [string, React.ReactNode][] = [
  ["Like", <Icon name="thumb" key="l" />],
  ["Add reaction", <Icon name="emoji" key="e" />],
  ["Reply", <Icon name="reply" key="r" />],
  ["Share", <Icon name="share" key="s" size={26} />],
  ["Create task with AI", <AiTask key="t" />],
  ["Ask Brain", <Brain key="b" size={29} />],
];

const ComposerTool = ({ name, label }: { name: GlyphName; label: string }) => (
  <ComposerIcon type="button" aria-label={label}>
    <Icon name={name} />
  </ComposerIcon>
);

export default function App() {
  return (
    <Page>
      <Global />
      <TopBar>
        <TopGroup $gap={16}>
          <WorkspaceButton>
            <Tile $bg="#12a085" $size={34} $font={20} $radius={8}>D</Tile>
            <WorkspaceName>DEMO</WorkspaceName>
            <Icon name="chevron" size={22} />
          </WorkspaceButton>
          <VRule $color="#cfcfcf" />
          <EventsButton>
            <Icon name="calendar" />
            <span>No events</span>
          </EventsButton>
        </TopGroup>
        <TopGroup $gap={15}>
          <SearchBox>
            <Icon name="search" />
            <PlainInput type="search" placeholder="Search everything..." aria-label="Search everything" />
            <Shortcut>Ctrl + K</Shortcut>
          </SearchBox>
          <TaskButton>
            <TaskDot><Icon name="plus" size={18} weight={3} /></TaskDot>
            Task
          </TaskButton>
        </TopGroup>
        <TopGroup $end $gap={24}>
          <button aria-label="Clips"><Icon name="video" /></button>
          <button aria-label="Notepad"><Icon name="doc" /></button>
          <button aria-label="Reports"><Icon name="chart" /></button>
          <button aria-label="Apps"><Icon name="grid" size={26} /></button>
          <TopGroup $gap={18}>
            <button aria-label="Brain"><Brain size={34} /></button>
            <TopGroup $gap={6}>
              <Avatar $bg={violet} $size={52} $font={22}>
                PT
                <Presence $size={22} $online $ring="#efefef" />
              </Avatar>
              <button aria-label="Account menu"><Icon name="chevron" size={16} /></button>
            </TopGroup>
          </TopGroup>
        </TopGroup>
      </TopBar>

      <Frame>
        <Rail>
          <RailGroup $gap={24}>
            {railItems.map(([glyph, label], i) => (
              <RailItem href="#" key={label} $on={i === 0}>
                <RailTile $on={i === 0}><NavGlyph name={glyph} /></RailTile>
                {label}
              </RailItem>
            ))}
          </RailGroup>
          <RailGroup $gap={15}>
            <RailItem href="#">
              <RailTile><NavGlyph name="invite" /></RailTile>
              Invite
            </RailItem>
            <RailRule />
            <RailItem href="#" aria-label="Help"><RailTile><NavGlyph name="help" /></RailTile></RailItem>
            <RailItem href="#" aria-label="Settings"><RailTile><NavGlyph name="gear" /></RailTile></RailItem>
          </RailGroup>
        </Rail>

        <Workspace>
          <Sidebar>
            <SideHead>
              <SideTitle>Home</SideTitle>
              <button aria-label="Inbox"><Icon name="inbox" /></button>
              <CreateButton><Icon name="plus" size={24} />Create</CreateButton>
            </SideHead>
            <Chips>
              <Chip>
                <SpaceStack>
                  <Tile $bg={violet} $size={13} $font={8} $radius={3}>T</Tile>
                  <Tile $bg={pink} $size={13} $font={8} $radius={3}>P</Tile>
                  <Tile $bg={violet} $size={13} $font={8} $radius={3}>P</Tile>
                </SpaceStack>
                Spaces
              </Chip>
              <Chip>Unread</Chip>
              <Chip>DMs</Chip>
            </Chips>
            <SideScroll>
              <SideList>
                <Rows>
                  {inboxRows.map(([glyph, label]) => (
                    <li key={label}>
                      <Row href="#"><RowIcon><Icon name={glyph} /></RowIcon>{label}</Row>
                    </li>
                  ))}
                </Rows>
                <SideRule />
                <Section>
                  <SectionTitle>Favorites<Arrow $dir="right" /></SectionTitle>
                </Section>
                <Section>
                  <SectionTitle>Channels</SectionTitle>
                  <Rows>
                    {channels.map((c) => (
                      <li key={c.name}>
                        <Row href="#" $on={c.on}>
                          <RowIcon $color={c.on ? green : undefined}>
                            <Icon name="hash" size={24} />
                            {c.sub && (
                              <CornerGlyph $cover={c.on ? "#eef0fe" : "#fcfcfc"}><Icon name={c.sub} size={20} weight={3} /></CornerGlyph>
                            )}
                            {c.tile && (
                              <CornerGlyph $cover="transparent"><Tile $bg={c.tile[1]} $size={20} $font={12}>{c.tile[0]}</Tile></CornerGlyph>
                            )}
                          </RowIcon>
                          <RowLabel>
                            {c.name}
                            {c.locked && <Tint><Icon name="lock" size={22} /></Tint>}
                          </RowLabel>
                        </Row>
                      </li>
                    ))}
                    <li>
                      <Row href="#" $faint><RowIcon><Icon name="plus" size={26} /></RowIcon>Add Channel</Row>
                    </li>
                  </Rows>
                </Section>
                <Section>
                  <SectionTitle>Direct Messages</SectionTitle>
                  <Rows>
                    <li>
                      <Row href="#">
                        <PersonSlot><Avatar $bg="#dc3d43" $size={38} $font={22}>N<Presence $size={17} $ring="#fcfcfc" /></Avatar></PersonSlot>
                        Noah Tremblay
                      </Row>
                    </li>
                    <li>
                      <Row href="#">
                        <PersonSlot><Avatar $bg={violet} $size={38} $font={22}>P<Presence $size={17} $online $ring="#fcfcfc" /></Avatar></PersonSlot>
                        Peter Thomas
                        <You>— You</You>
                      </Row>
                    </li>
                    <li>
                      <Row href="#" $faint><RowIcon><Icon name="plus" size={26} /></RowIcon>New message</Row>
                    </li>
                  </Rows>
                </Section>
              </SideList>
              <Bar before={5} after={29} />
            </SideScroll>
          </Sidebar>

          <Main>
            <HeadRow>
              <FolderTile><Icon name="folder" /></FolderTile>
              <Heading>
                <TitleButton><ChannelName>Product Development</ChannelName><Icon name="chevron" size={22} /></TitleButton>
                <Crumbs>
                  <span>Public</span><span>·</span><span>Folder in</span>
                  <CrumbLink href="#"><Tile $bg={pink} $size={26} $font={14} $radius={6}>P</Tile>Project</CrumbLink>
                </Crumbs>
              </Heading>
              <Actions>
                <Outlined as="button" $pad={6}><AiFace />1</Outlined>
                <Outlined as="button" $pad={7}><Tint $color="#ffb224"><Icon name="bolt" size={26} /></Tint>Automate</Outlined>
                <ActionRule />
                <Outlined $pad={6}>
                  <Faces>
                    <Avatar $bg={teal} $size={35} $font={20}>G</Avatar>
                    <Avatar $bg={coal} $size={35} $font={20}>J</Avatar>
                    <Avatar $bg={violet} $size={35} $font={20}>P</Avatar>
                    <Count>3</Count>
                  </Faces>
                  <VRule />
                  <Tint as="button" aria-label="Notifications"><Icon name="bell" /></Tint>
                </Outlined>
                <Outlined $pad={8}>
                  <Tint as="button" aria-label="Call"><Icon name="phone" /></Tint>
                  <VRule />
                  <button aria-label="Call options"><Icon name="chevron" size={20} /></button>
                </Outlined>
                <Outlined as="button" $pad={12}>Share</Outlined>
                <Spacer $w={0} />
                <button aria-label="AI"><Brain size={29} /></button>
                AI
                <Spacer $w={15} />
                <Tint as="button" aria-label="Details panel"><Icon name="panel" /></Tint>
              </Actions>
            </HeadRow>
            <Tabs>
              <Tab href="#" $on>Channel</Tab>
              <Tab href="#">Overview</Tab>
              <Spacer $w={7} />
              <VRule />
              <Spacer $w={10} />
              {views.map(([kind, label]) => (
                <Tab href="#" key={kind}><ViewGlyph kind={kind} />{label}</Tab>
              ))}
              <Tab href="#"><DayIcon>31</DayIcon>Calendar</Tab>
              <Spacer $w={7} />
              <VRule />
              <Spacer $w={10} />
              <Tab as="button"><Icon name="plus" size={26} />View</Tab>
            </Tabs>

            <FeedWrap>
              <Feed>
                <DateRow><DatePill>Friday, May 30th<Icon name="chevron" size={22} weight={3} /></DatePill></DateRow>
                <Post
                  who="Grey"
                  initials="G"
                  color={teal}
                  at="May 30 at 1:07 PM"
                  extra={
                    <Reactions>
                      <Reaction><ThumbEmoji />2</Reaction>
                      <AddReaction aria-label="Add reaction"><Icon name="emoji" size={27} /></AddReaction>
                    </Reactions>
                  }
                >
                  Hey team, I’ve finalized the API documentation. Let me know if anything needs adjustments before integration.
                </Post>
                <Post
                  who="John B"
                  initials="JB"
                  color={coal}
                  at="May 30 at 4:16 PM"
                  hover
                  tools={
                    <HoverBar>
                      {hoverTools.map(([label, icon]) => (
                        <HoverButton key={label} aria-label={label}>{icon}</HoverButton>
                      ))}
                      <HoverButton $on aria-label="More"><Icon name="more" size={26} /></HoverButton>
                    </HoverBar>
                  }
                >
                  Great! I’ll review it and cross-check with the database setup. We need to ensure smooth data flow.
                </Post>
                <Post
                  who="Peter Thomas"
                  initials="PT"
                  color={violet}
                  at="May 30 at 4:21 PM"
                  thread
                  extra={
                    <ThreadLink href="#">
                      <Avatar $bg={teal} $size={37} $font={22}>G</Avatar>
                      1 reply
                      <Time>2 days ago</Time>
                    </ThreadLink>
                  }
                >
                  <a href="#">@Grey</a> Speaking of setup, I ran into a minor issue with the environment configuration. The staging server isn’t syncing properly.
                </Post>
                <Post who="Grey" initials="G" color={teal} at="May 30 at 4:40 PM">
                  That’s concerning. Could be a configuration issue—let’s debug it together.
                </Post>
                <Post who="John B" initials="JB" color={coal} at="May 30 at 4:40 PM">
                  I’ll check the logs and see if there’s anything unusual.
                </Post>
                <DateRow><DatePill>Today<Icon name="chevron" size={22} weight={3} /></DatePill></DateRow>
              </Feed>
              <Bar before={45} after={11} />
              <SideTools>
                <button aria-label="Search"><Icon name="search" /></button>
                <button aria-label="Replies"><Icon name="reply" /></button>
                <button aria-label="FollowUps"><Icon name="followup" /></button>
                <button aria-label="Switch layout"><Icon name="swap" /></button>
              </SideTools>
            </FeedWrap>

            <ComposerWrap>
              <Composer onSubmit={(e) => e.preventDefault()}>
                <ComposerInput aria-label="Message" placeholder="Write to Product Development, press 'space' for Brain, or '/' for commands" />
                <ComposerBar>
                  <RoundButton type="button" aria-label="Add"><Icon name="plus" size={24} /></RoundButton>
                  <VRule />
                  <SelectBox>
                    <ModeSelect aria-label="Message type"><option>Message</option></ModeSelect>
                    <Icon name="chevron" size={22} weight={3} />
                  </SelectBox>
                  <ComposerIcon type="button" aria-label="Brain"><Brain size={29} /></ComposerIcon>
                  <ComposerTool name="clip" label="Attach" />
                  <ComposerTool name="at" label="Mention" />
                  <ComposerTool name="followup" label="FollowUp" />
                  <ComposerTool name="emoji" label="Emoji" />
                  <Spacer $w={6} />
                  <VRule />
                  <Spacer $w={3} />
                  <ComposerTool name="video" label="Record clip" />
                  <ComposerTool name="mic" label="Record voice" />
                  <Spacer $w={3} />
                  <VRule />
                  <Spacer $w={3} />
                  <ComposerTool name="taskPlus" label="New task" />
                  <ComposerTool name="docPlus" label="New doc" />
                  <ComposerTool name="canvasPlus" label="New whiteboard" />
                  <SendButton type="submit" aria-label="Send">
                    <svg width="26" height="26" viewBox="0 0 24 24" aria-hidden="true">
                      <path d="M2 2.500C2 1 3 .5 4.500 1 11 3 18 6.500 22.500 10.500a2 2 0 0 1 0 3C18 17.500 11 21 4.500 23 3 23.500 2 23 2 21.500L3.500 13H14v-2H3.500z" fill="#fff" />
                    </svg>
                  </SendButton>
                </ComposerBar>
              </Composer>
            </ComposerWrap>
          </Main>
        </Workspace>
      </Frame>
    </Page>
  );
}
